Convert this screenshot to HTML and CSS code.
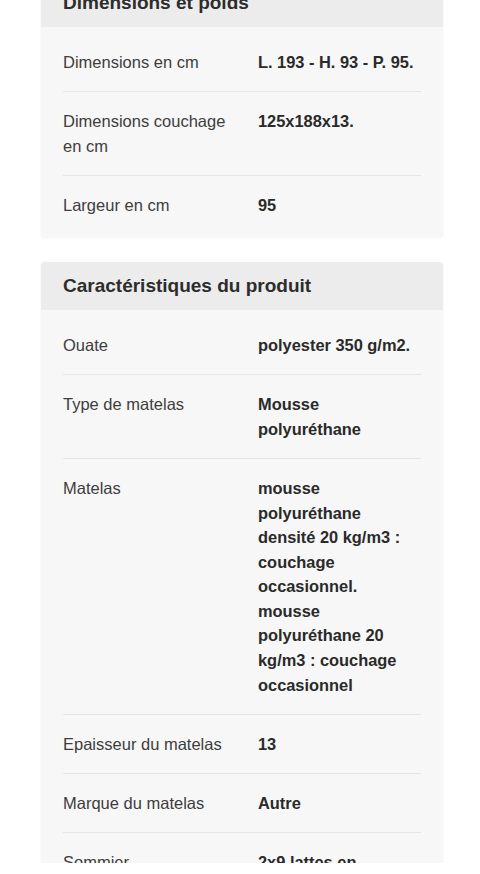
FILE: index.html
```html
<!DOCTYPE html>
<html lang="fr">
<head>
  <meta charset="UTF-8">
  <meta name="viewport" content="width=device-width, initial-scale=1.0">
  <title>Caractéristiques</title>
  <link rel="stylesheet" href="styles.css">
</head>
<body>
  <div class="sheet">
    <section class="card">
      <h2 class="card-title">Dimensions et poids</h2>
      <div class="card-body">
        <div class="row"><div class="label">Dimensions en cm</div><div class="value">L. 193 - H. 93 - P. 95.</div></div>
        <div class="row"><div class="label">Dimensions couchage en cm</div><div class="value">125x188x13.</div></div>
        <div class="row"><div class="label">Largeur en cm</div><div class="value">95</div></div>
      </div>
    </section>

    <section class="card">
      <h2 class="card-title">Caractéristiques du produit</h2>
      <div class="card-body">
        <div class="row"><div class="label">Ouate</div><div class="value">polyester 350 g/m2.</div></div>
        <div class="row"><div class="label">Type de matelas</div><div class="value">Mousse polyuréthane</div></div>
        <div class="row"><div class="label">Matelas</div><div class="value">mousse polyuréthane densité 20 kg/m3 : couchage occasionnel. mousse polyuréthane 20 kg/m3 : couchage occasionnel</div></div>
        <div class="row"><div class="label">Epaisseur du matelas</div><div class="value">13</div></div>
        <div class="row"><div class="label">Marque du matelas</div><div class="value">Autre</div></div>
        <div class="row"><div class="label">Sommier</div><div class="value">2x9 lattes en multiplis de hêtre</div></div>
      </div>
    </section>
  </div>
  <div class="bottom-edge"></div>
</body>
</html>
```

FILE: styles.css
```css
body { margin: 0; background: #fff; font-family: "Liberation Sans", Arial, sans-serif; color: #3d3d3d; }
.sheet { margin-top: -21px; padding: 0 37px 40px 41px; display: flex; flex-direction: column; gap: 24px; }
.card { background: #f7f7f7; border-radius: 4px; box-shadow: 0 0 3px rgba(0, 0, 0, 0.05); overflow: hidden; }
.card-title { margin: 0; height: 48px; line-height: 48px; padding: 0 22px; background: #ececec; font-size: 19px; font-weight: 700; color: #2d2d2d; }
.card-body { padding: 6px 22px 4px; }
.row { display: grid; grid-template-columns: 195px 1fr; padding: 16.8px 0; line-height: 24.6px; font-size: 16.5px; border-bottom: 1px solid #e6e6e6; }
.row:last-child { border-bottom: none; }
.label { padding-right: 12px; }
.value { font-size: 16.4px; font-weight: 700; color: #2a2a2a; }
.bottom-edge { position: fixed; left: 0; right: 0; bottom: 0; height: 11px; background: #fff; }
```
